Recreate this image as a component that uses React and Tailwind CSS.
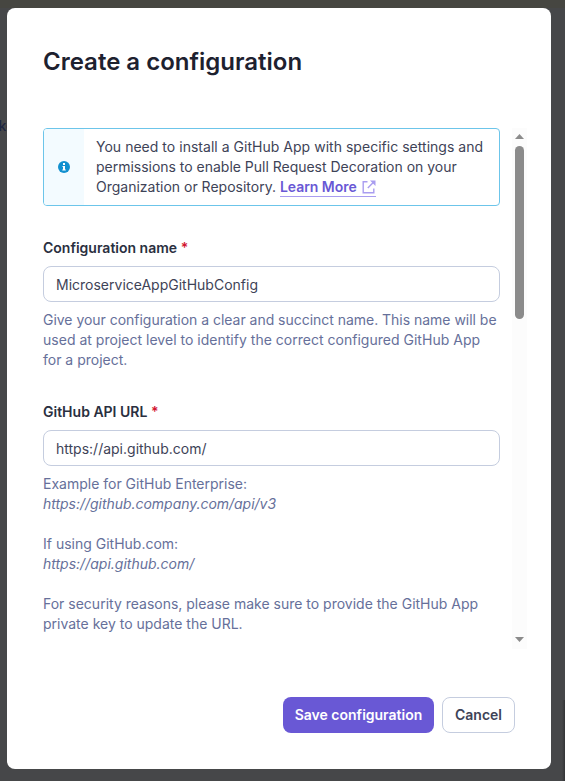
import React from "react";

function Field({ label, value, children }) {
  return (
    <div className="flex flex-col">
      <label className="h-5 text-sm leading-5 font-semibold text-[#2a2f40]">
        {label} <span className="text-[#d2142f]">*</span>
      </label>
      <input
        type="text"
        defaultValue={value}
        className="mt-2 h-9 w-full rounded-lg border border-[#c5cddf] bg-white px-3 text-sm text-[#3e4357] outline-none"
      />
      <div className="mt-2 text-sm leading-5 text-[#66709a]">{children}</div>
    </div>
  );
}

function InfoIcon() {
  return (
    <svg width="12" height="12" viewBox="0 0 12 12" aria-hidden="true">
      <circle cx="6" cy="6" r="6" fill="#1290cf" />
      <path d="M5 2h2v2H5zM4.5 5H7v3.5h.8v1H4.3v-1H5V6h-.5z" fill="#fff" />
    </svg>
  );
}

function ExternalIcon() {
  return (
    <svg width="14" height="14" viewBox="0 0 14 14" fill="none" stroke="#a99df0" strokeWidth="1.4" className="ml-[5px]" aria-hidden="true">
      <path d="M5.5 1.7H1.2v11.1h10.6V8.5" />
      <path d="M5.8 8 12 1.8" />
      <path d="M8 .5h5.5V6z" fill="#a99df0" stroke="none" />
    </svg>
  );
}

function Scrollbar() {
  return (
    <div className="flex h-[521px] w-[15px] flex-col items-center bg-[#fcfcfc] pt-1.5 pb-[7px]">
      <svg width="9" height="5" viewBox="0 0 9 5" aria-hidden="true">
        <path d="M4.5 0 9 5H0z" fill="#8b8b8b" />
      </svg>
      <div className="mt-[7px] h-[173px] w-[9px] rounded-full bg-[#8b8b8b]" />
      <svg width="9" height="5" viewBox="0 0 9 5" className="mt-auto" aria-hidden="true">
        <path d="M4.5 5 9 0H0z" fill="#8b8b8b" />
      </svg>
    </div>
  );
}

export default function App() {
  return (
    <div className="relative h-[781px] w-[565px] overflow-hidden border-t-8 border-[#464641] bg-[#464749] pl-[7px] font-['Inter',sans-serif]">
      <span className="absolute top-[108px] left-[-1.5px] text-sm leading-5 font-medium text-[#1d2540]">ke</span>
      <div className="absolute top-[692px] right-0 h-[81px] w-[3px] bg-linear-to-r from-[#464749] to-[#333436]" />
      <div className="relative flex h-[761px] w-[544px] flex-col rounded-lg bg-white pt-9 pl-9">
        <h1 className="text-2xl leading-9 font-semibold text-[#1d212f]">Create a configuration</h1>

        <div className="mt-12 flex h-[521px] gap-3">
          <div className="flex w-[457px] flex-col">
            <div className="flex h-[78px] overflow-hidden rounded border border-[#6cc5ea]">
              <div className="flex w-10 shrink-0 items-center justify-center bg-[#f3fbff]">
                <InfoIcon />
              </div>
              <p className="pt-2 pl-3 text-sm leading-5 whitespace-nowrap text-[#3e4357]">
                <span className="tracking-[0.025px]">You need to install a GitHub App with specific settings and</span>
                <br />
                <span className="tracking-[-0.015px]">permissions to enable Pull Request Decoration on your</span>
                <br />
                Organization or Repository.{" "}
                <a className="relative -top-px inline-flex h-[19px] items-center border-b border-[#a99df0] align-middle font-semibold tracking-[-0.03px] text-[#6958d5]">
                  Learn More
                  <ExternalIcon />
                </a>
              </p>
            </div>

            <div className="mt-8 flex flex-col gap-8">
              <Field label="Configuration name" value="MicroserviceAppGitHubConfig">
                <span className="tracking-[-0.025px]">Give your configuration a clear and succinct name. This name will be</span>
                <br />
                <span className="tracking-[0.015px]">used at project level to identify the correct configured GitHub App</span>
                <br />
                for a project.
              </Field>
              <Field label="GitHub API URL" value="https://api.github.com/">
                <p>Example for GitHub Enterprise:</p>
                <p className="tracking-[-0.03px] italic">https://github.company.com/api/v3</p>
                <p className="mt-5">If using GitHub.com:</p>
                <p className="italic">https://api.github.com/</p>
                <p className="mt-5">For security reasons, please make sure to provide the GitHub App</p>
                <p>private key to update the URL.</p>
              </Field>
            </div>
          </div>
          <Scrollbar />
        </div>

        <div className="mt-12 mr-9 flex justify-end gap-2 text-sm font-semibold">
          <button className="h-9 w-[151px] rounded-lg bg-[#6958d5] whitespace-nowrap text-white">Save configuration</button>
          <button className="h-9 w-[73px] rounded-lg border border-[#c5cddf] bg-white text-[#3e4357]">Cancel</button>
        </div>
      </div>
    </div>
  );
}
